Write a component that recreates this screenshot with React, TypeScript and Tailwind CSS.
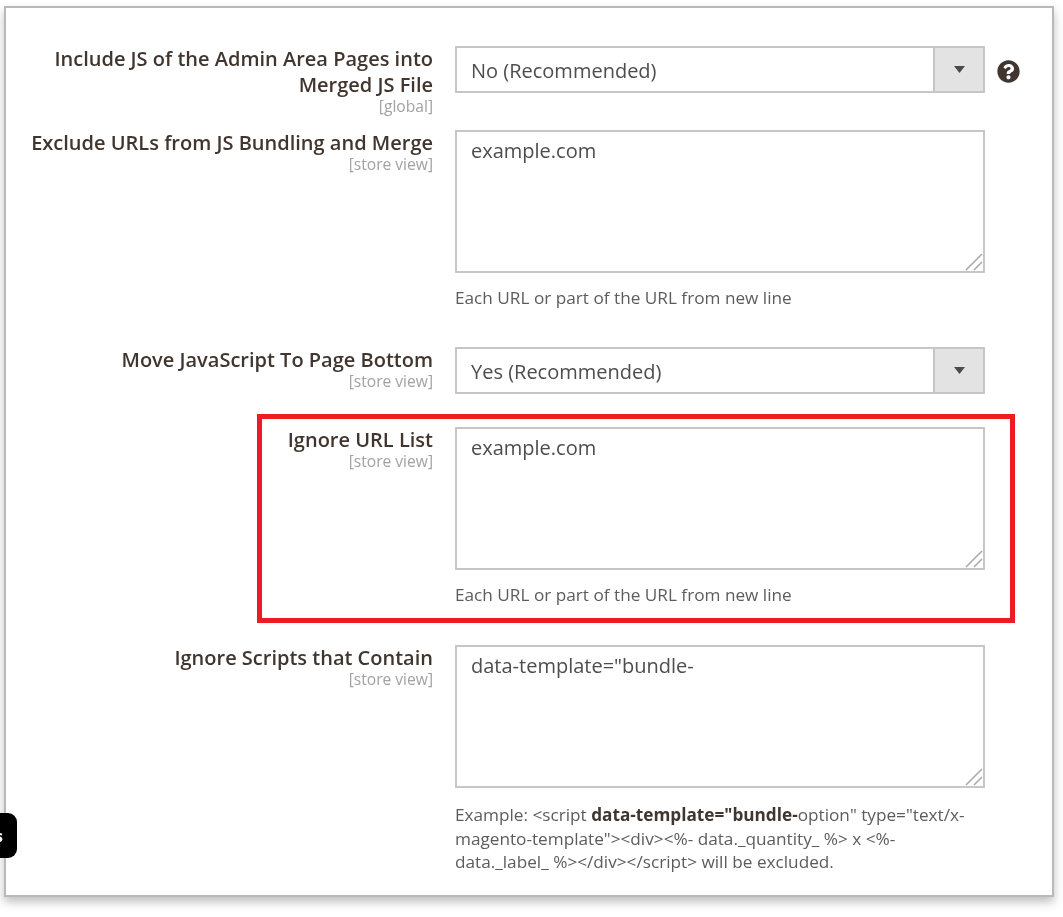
import { ReactNode } from "react";
import { FaQuestionCircle } from "react-icons/fa";

function FieldLabel({ title, scope }: { title: ReactNode; scope: string }) {
  return (
    <div className="w-[427px] shrink-0 text-right">
      <div className="text-[20px] leading-[26px] font-semibold text-[#41362f]">{title}</div>
      <div className="text-[15.6px] leading-[16px] text-[#a2a2a2]">{scope}</div>
    </div>
  );
}

function SelectBox({ value }: { value: string }) {
  return (
    <div className="flex h-[47px] w-[530px] items-stretch border-2 border-[#c6c6c6] bg-white">
      <div className="flex-1 pl-[14px] text-[20px] leading-[46px] text-[#4d4d4d]">{value}</div>
      <div className="flex w-[50px] items-center justify-center border-l-2 border-[#c6c6c6] bg-[#e3e3e3]">
        <svg width="11" height="7" viewBox="0 0 11 7">
          <path d="M0 0h11L5.5 7z" fill="#514943" />
        </svg>
      </div>
    </div>
  );
}

function TextBox({ value }: { value: string }) {
  return (
    <div className="relative h-[143px] w-[530px] border-2 border-[#c6c6c6] bg-white pl-[14px] pt-[5px] text-[20px] leading-[28px] text-[#4d4d4d]">
      {value}
      <svg className="absolute bottom-0 right-0" width="18" height="18" viewBox="0 0 18 18">
        <path d="M1 17 17 1M9 17l8-8" stroke="#a9a9a9" strokeWidth="1.6" fill="none" />
      </svg>
    </div>
  );
}

function Note({ children }: { children: ReactNode }) {
  return <div className="mt-[15px] w-[530px] text-[17.2px] leading-[20px] text-[#5c5c5c]">{children}</div>;
}

export default function App() {
  return (
    <div className="h-[917px] w-[1063px] overflow-hidden bg-white pl-[4px] pt-[6px] font-['Open_Sans',sans-serif] blur-[0.5px]">
      <div className="relative h-[891px] w-[1050px] border-2 border-[#b9b9b9] bg-white pt-[38px] shadow-[0_5px_9px_rgba(0,0,0,0.25)]">
        <div className="flex gap-[22px]">
          <FieldLabel
            title={
              <>
                Include JS of the Admin Area Pages into
                <br />
                Merged JS File
              </>
            }
            scope="[global]"
          />
          <SelectBox value="No (Recommended)" />
          <FaQuestionCircle className="ml-[-10px] mt-[14px] text-[23px] text-[#41362f]" />
        </div>

        <div className="mt-[16px] flex gap-[22px]">
          <FieldLabel title="Exclude URLs from JS Bundling and Merge" scope="[store view]" />
          <div>
            <TextBox value="example.com" />
            <Note>Each URL or part of the URL from new line</Note>
          </div>
        </div>

        <div className="mt-[39px] flex gap-[22px]">
          <FieldLabel title="Move JavaScript To Page Bottom" scope="[store view]" />
          <SelectBox value="Yes (Recommended)" />
        </div>

        <div className="relative mt-[33px] flex gap-[22px]">
          <FieldLabel title="Ignore URL List" scope="[store view]" />
          <div>
            <TextBox value="example.com" />
            <Note>Each URL or part of the URL from new line</Note>
          </div>
          <div className="absolute left-[251px] top-[-13px] h-[209px] w-[758px] border-[5px] border-[#ed1c24]" />
        </div>

        <div className="mt-[40px] flex gap-[22px]">
          <FieldLabel title="Ignore Scripts that Contain" scope="[store view]" />
          <div>
            <TextBox value={'data-template="bundle-'} />
            <div className="mt-[15px] w-[530px] text-[17.2px] leading-[23.5px] text-[#5c5c5c]">
              Example: &lt;script <span className="font-bold text-[#41362f]">data-template="bundle-</span>
              option" type="text/x-magento-template"&gt;&lt;div&gt;&lt;%- data._quantity_ %&gt; x &lt;%-
              data._label_ %&gt;&lt;/div&gt;&lt;/script&gt; will be excluded.
            </div>
          </div>
        </div>

        <div className="absolute bottom-[37px] left-[-6px] flex h-[45px] w-[17px] items-center justify-end overflow-hidden rounded-r-[9px] bg-black pr-[14px] text-[16px] font-bold text-white">
          s
        </div>
      </div>
    </div>
  );
}
